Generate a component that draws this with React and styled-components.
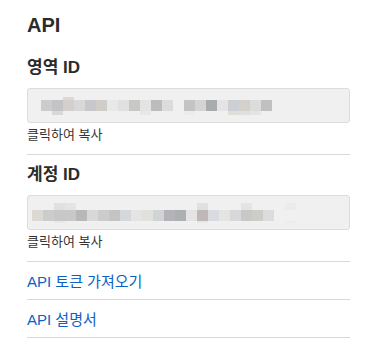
import React from 'react';
import styled, { createGlobalStyle } from 'styled-components';

const GlobalStyle = createGlobalStyle`
  body {
    margin: 0;
    background: #ffffff;
    font-family: "Liberation Sans", "Noto Sans CJK KR", sans-serif;
    color: #333333;
  }
`;

const Panel = styled.div`
  width: 323px;
  padding: 12px 0 0 27px;
`;

const Title = styled.h2`
  margin: 0 0 19px;
  font-size: 20px;
  line-height: 26px;
  font-weight: 700;
  color: #2b2b2b;
`;

const Section = styled.section`
  padding: ${(p) => (p.$first ? '0' : '9px')} 0 11px;
  border-bottom: 1px solid #d9d9d9;
`;

const Label = styled.h3`
  margin: 0 0 9px;
  font-size: 17px;
  line-height: 22px;
  font-weight: 700;
  color: #2b2b2b;
`;

const IdBox = styled.div`
  height: 33px;
  box-sizing: content-box;
  background: #f0f0f0;
  border: 1px solid #dcdcdc;
  border-radius: 3px;
  padding-left: ${(p) => p.$inset}px;
  display: flex;
  flex-direction: column;
  justify-content: center;
  overflow: hidden;
  cursor: pointer;
`;

const PixelRow = styled.div`
  display: flex;
  height: ${(p) => p.$h}px;
`;

const Pixel = styled.span`
  width: 11px;
  flex: none;
  background: ${(p) => p.$c || 'transparent'};
`;

const Caption = styled.div`
  margin-top: 4px;
  font-size: 13px;
  line-height: 16px;
  color: #333333;
`;

const LinkRow = styled.a`
  display: flex;
  align-items: center;
  height: 37px;
  border-bottom: 1px solid #d9d9d9;
  font-size: 15px;
  color: #0b62c4;
  text-decoration: none;
`;

const regionRows = [
  { h: 3, cells: ['', '', '#dcd8d4'] },
  {
    h: 11,
    cells: ['#cccccc', '#c4c4c8', '#d4cfcc', '#d8d8d8', '#c8c8cc', '#d0ccc8', '#e8e8e8', '#e0e0e0', '#c8c8c4', '#e4e4e4', '#bcbcbc', '#dcdcdc', '', '#c4c4c4', '#d4d4d4', '#a8acac', '#e4e4e4', '#ccd0d4', '#d4d0cc', '#dcdcdc', '#c0c0c0'],
  },
  { h: 4, cells: ['', '#d8d8dc', '', '', '', '', '', '', '', '#e8e8e8', '', '', '', '#ececec', '', '', '', '#e0dcd8', '#e0e0e0', '#e4e4e4'] },
];

const accountRows = [
  { h: 7, cells: ['', '', '#e0e0e0', '#e4e4e4', '', '', '', '', '', '', '', '', '', '', '', '#e0e0e0', '', '', '', '#e4e4e4', '', '', '', '#ebebeb'] },
  {
    h: 11,
    cells: ['#dcd8d4', '#cccccc', '#c8c8c8', '#c8c8c8', '#b8b8b8', '#d8d8d8', '#cccccc', '#c4c4c4', '#d4d8dc', '#e4e4e4', '#e0e0dc', '#d0d4d4', '#b4b4b8', '#acb0b0', '#e4e4e4', '#c0b8b8', '#d8dce0', '#e4e4e0', '#d8d8dc', '#c8c8c4', '#ccccc8', '#dcdcdc'],
  },
  { h: 2, cells: ['', '', '#e8e8e8', '', '', '', '', '', '', '', '', '', '', '', '', '#e8e8e8', '', '', '', '', '', '', '', '#ececec'] },
];

const Pixelated = ({ rows }) => (
  <div>
    {rows.map((row, i) => (
      <PixelRow key={i} $h={row.h}>
        {row.cells.map((c, j) => (
          <Pixel key={j} $c={c} />
        ))}
      </PixelRow>
    ))}
  </div>
);

const CopyField = ({ label, rows, inset, first }) => (
  <Section $first={first}>
    <Label>{label}</Label>
    <IdBox $inset={inset}>
      <Pixelated rows={rows} />
    </IdBox>
    <Caption>클릭하여 복사</Caption>
  </Section>
);

const App = () => (
  <>
    <GlobalStyle />
    <Panel>
      <Title>API</Title>
      <CopyField first label="영역 ID" rows={regionRows} inset={13} />
      <CopyField label="계정 ID" rows={accountRows} inset={4} />
      <LinkRow href="#">API 토큰 가져오기</LinkRow>
      <LinkRow href="#">API 설명서</LinkRow>
    </Panel>
  </>
);

export default App;
